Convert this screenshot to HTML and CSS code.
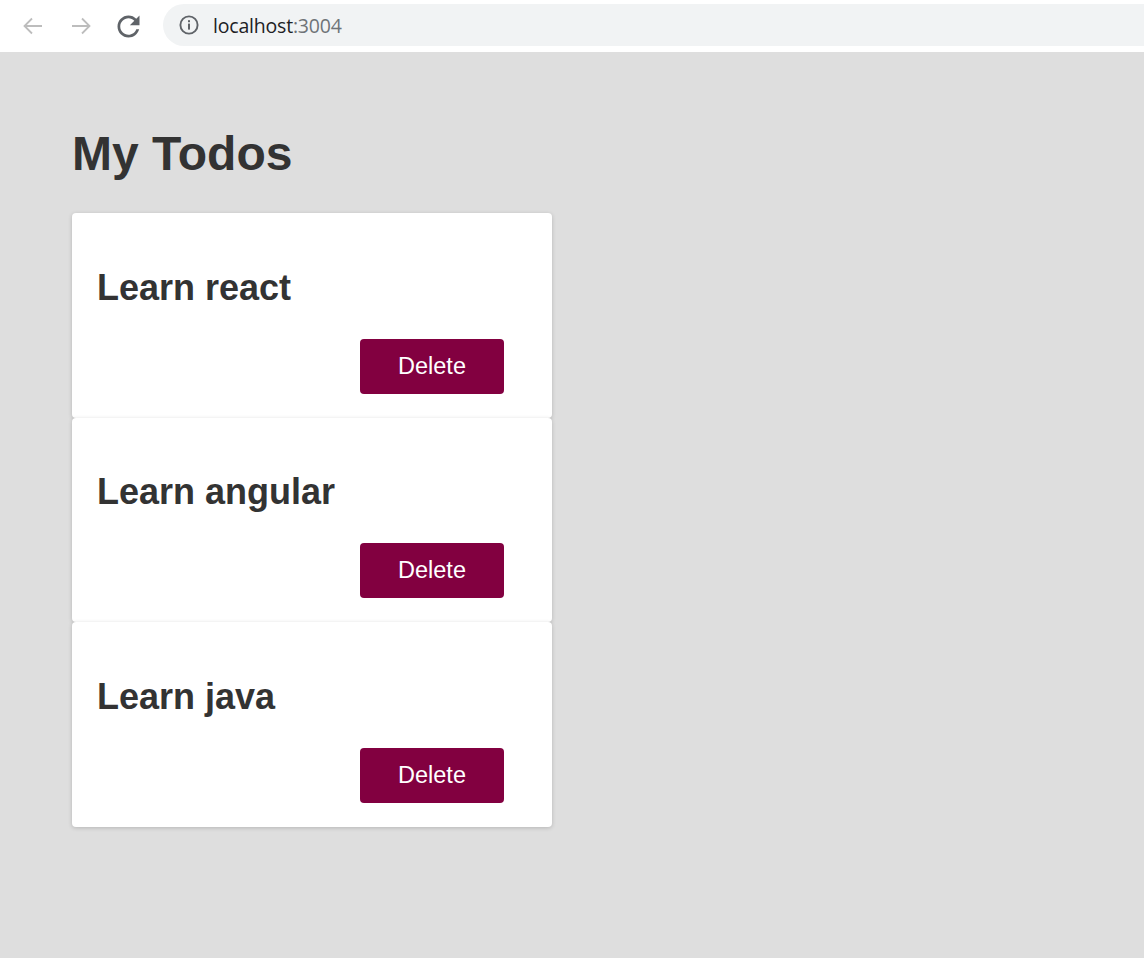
FILE: index.html
```html
<!DOCTYPE html>
<html lang="en">
<head>
<meta charset="utf-8">
<title>My Todos</title>
<link rel="stylesheet" href="styles.css">
</head>
<body>
<header class="chrome">
  <div class="nav">
    <span class="nav-btn">
      <svg width="24" height="24" viewBox="0 0 24 24"><path d="M21 12H3.5M11 4.5L3.5 12L11 19.5" fill="none" stroke="#bdbdbd" stroke-width="1.8"/></svg>
    </span>
    <span class="nav-btn">
      <svg width="24" height="24" viewBox="0 0 24 24"><path d="M3 12H20.5M13 4.5L20.5 12L13 19.5" fill="none" stroke="#bdbdbd" stroke-width="1.8"/></svg>
    </span>
    <span class="nav-btn">
      <svg width="33" height="33" viewBox="0 0 24 24"><path fill="#5f6368" d="M17.65 6.35C16.2 4.9 14.21 4 12 4c-4.42 0-7.99 3.58-7.99 8s3.57 8 7.99 8c3.73 0 6.84-2.55 7.73-6h-2.08c-.82 2.330-3.04 4-5.650 4-3.31 0-6-2.690-6-6s2.69-6 6-6c1.66 0 3.14.69 4.22 1.78L13 11h7V4l-2.35 2.35z"/></svg>
    </span>
  </div>
  <div class="omnibox">
    <svg class="info" width="22" height="22" viewBox="0 0 22 22"><circle cx="11" cy="11" r="8.6" fill="none" stroke="#5f6368" stroke-width="1.9"/><rect x="10" y="9.6" width="2" height="6" fill="#5f6368"/><rect x="10" y="6.2" width="2" height="2" fill="#5f6368"/></svg>
    <span class="url">localhost<span class="port">:3004</span></span>
  </div>
</header>
<main class="page">
  <h1 class="title">My Todos</h1>
  <div class="list">
    <div class="card">
      <h2 class="card-title">Learn react</h2>
      <div class="actions"><button class="btn">Delete</button></div>
    </div>
    <div class="card">
      <h2 class="card-title">Learn angular</h2>
      <div class="actions"><button class="btn">Delete</button></div>
    </div>
    <div class="card">
      <h2 class="card-title">Learn java</h2>
      <div class="actions"><button class="btn">Delete</button></div>
    </div>
  </div>
</main>
</body>
</html>
```
FILE: styles.css
```css
html, body {
  margin: 0;
  padding: 0;
}
body {
  background: #dedede;
  font-family: "Liberation Sans", Arial, sans-serif;
  min-height: 958px;
}
.chrome {
  height: 52px;
  background: #ffffff;
  display: flex;
  align-items: center;
  box-sizing: border-box;
}
.nav {
  display: flex;
  align-items: center;
  width: 163px;
  padding-left: 21px;
  box-sizing: border-box;
}
.nav-btn {
  display: flex;
  align-items: center;
  justify-content: center;
  width: 24px;
  height: 33px;
  margin-right: 24px;
}
.nav-btn:nth-child(3) {
  width: 33px;
  margin-left: -5px;
}
.omnibox {
  flex: 1;
  height: 42px;
  margin-top: -2px;
  background: #f1f3f4;
  border-radius: 21px 0 0 21px;
  display: flex;
  align-items: center;
  padding-left: 15px;
}
.info {
  margin-right: 13px;
}
.url {
  font-family: "Open Sans", "Noto Sans", sans-serif;
  font-size: 19.5px;
  color: #202124;
  letter-spacing: -0.2px;
}
.port {
  color: #6f7378;
}
.page {
  padding: 74px 72px 40px;
}
.title {
  margin: 0 0 32px;
  font-size: 48px;
  font-weight: bold;
  color: #333333;
  line-height: normal;
}
.list {
  width: 480px;
  display: flex;
  flex-direction: column;
}
.card {
  background: #ffffff;
  border-radius: 4px;
  box-shadow: 0 1px 4px rgba(0, 0, 0, 0.18);
  padding: 24px 24px 24px 25px;
}
.card-title {
  margin: 29.5px 0 30px;
  font-size: 36px;
  font-weight: bold;
  color: #333333;
  line-height: normal;
}
.actions {
  display: flex;
  justify-content: flex-end;
  padding-right: 24px;
}
.btn {
  width: 144px;
  height: 55px;
  border: none;
  border-radius: 4px;
  background: #820040;
  color: #ffffff;
  font-family: "Liberation Sans", Arial, sans-serif;
  font-size: 23.5px;
  padding: 0;
  cursor: pointer;
}
```
